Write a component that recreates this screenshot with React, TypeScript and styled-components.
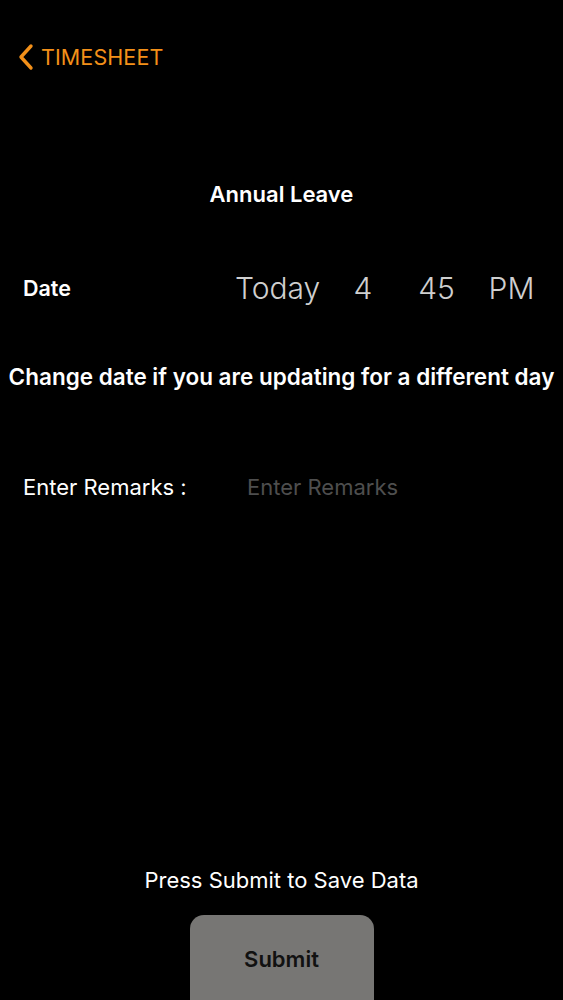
import styled, { createGlobalStyle } from "styled-components";

const Global = createGlobalStyle`
  html, body {
    margin: 0;
    padding: 0;
    background: #000;
  }
  * { box-sizing: border-box; }
`;

export default function App() {
  return (
    <Screen>
      <Global />
      <Header>
        <BackButton>
          <svg width="17" height="28" viewBox="0 0 17 28">
            <path d="M14 3 L4 14 L14 25" fill="none" stroke="#f39019" strokeWidth="3.4" strokeLinecap="round" strokeLinejoin="round" />
          </svg>
          <BackLabel>TIMESHEET</BackLabel>
        </BackButton>
      </Header>

      <Title>Annual Leave</Title>

      <DateRow>
        <FieldLabel>Date</FieldLabel>
        <Picker>
          <PickerCol w={95} align="left">Today</PickerCol>
          <PickerCol w={66}>4</PickerCol>
          <PickerCol w={81}>45</PickerCol>
          <PickerCol w={69}>PM</PickerCol>
        </Picker>
      </DateRow>

      <Hint>Change date if you are updating for a different day</Hint>

      <RemarksRow>
        <RemarksLabel>Enter Remarks :</RemarksLabel>
        <RemarksInput placeholder="Enter Remarks" />
      </RemarksRow>

      <Spacer />

      <Footer>
        <FooterNote>Press Submit to Save Data</FooterNote>
        <SubmitButton>Submit</SubmitButton>
      </Footer>
    </Screen>
  );
}

const Screen = styled.div`
  width: 563px;
  height: 1000px;
  overflow: hidden;
  background: #000;
  color: #fff;
  font-family: Inter, "Noto Sans", sans-serif;
  display: flex;
  flex-direction: column;
`;

const Header = styled.div`
  height: 116px;
  padding: 43px 0 0 17px;
`;

const BackButton = styled.div`
  display: flex;
  align-items: center;
  gap: 7px;
`;

const BackLabel = styled.span`
  color: #f39019;
  font-size: 21.5px;
  letter-spacing: 0.1px;
`;

const Title = styled.div`
  text-align: center;
  font-size: 22px;
  font-weight: 600;
  line-height: 26px;
  margin-top: 65px;
`;

const DateRow = styled.div`
  display: flex;
  align-items: center;
  justify-content: space-between;
  margin-top: 61px;
  padding: 0 17px 0 23px;
  height: 40px;
`;

const FieldLabel = styled.div`
  font-size: 21.5px;
  font-weight: 600;
`;

const Picker = styled.div`
  display: flex;
  align-items: center;
  color: #cfcfcf;
  font-size: 30px;
  font-weight: 300;
`;

const PickerCol = styled.span<{ w: number; align?: string }>`
  width: ${(p) => p.w}px;
  text-align: ${(p) => p.align || "center"};
  white-space: nowrap;
`;

const Hint = styled.div`
  text-align: center;
  font-size: 22.5px;
  font-weight: 600;
  margin-top: 56px;
  line-height: 26px;
  white-space: nowrap;
`;

const RemarksRow = styled.div`
  display: flex;
  align-items: center;
  margin-top: 82px;
  padding-left: 23px;
  height: 30px;
`;

const RemarksLabel = styled.div`
  font-size: 22px;
  width: 224px;
`;

const RemarksInput = styled.input`
  background: transparent;
  border: none;
  outline: none;
  color: #fff;
  font-family: inherit;
  font-size: 22px;
  padding: 0;
  width: 280px;
  &::placeholder {
    color: #4e4e4e;
  }
`;

const Spacer = styled.div`
  flex: 1;
`;

const Footer = styled.div`
  display: flex;
  flex-direction: column;
  align-items: center;
  margin-bottom: -15px;
`;

const FooterNote = styled.div`
  font-size: 22px;
  line-height: 26px;
`;

const SubmitButton = styled.button`
  margin-top: 22px;
  width: 184px;
  height: 100px;
  padding-bottom: 14px;
  border: none;
  border-radius: 14px;
  background: #777674;
  color: #111;
  font-family: inherit;
  font-size: 22px;
  font-weight: 600;
`;
